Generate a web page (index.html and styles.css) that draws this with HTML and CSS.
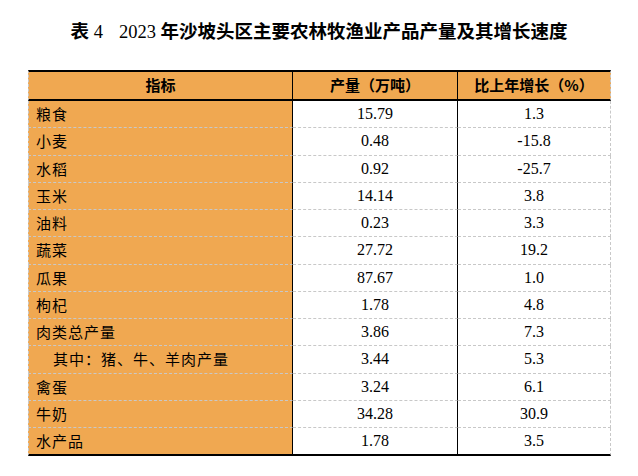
FILE: index.html
```html
<!DOCTYPE html>
<html lang="zh-CN">
<head>
<meta charset="utf-8">
<title>表4 2023年沙坡头区主要农林牧渔业产品产量及其增长速度</title>
<link rel="stylesheet" href="styles.css">
</head>
<body>
<h1 class="title">表 <span class="lat">4</span><span class="gap"></span><span class="lat">2023</span> 年沙坡头区主要农林牧渔业产品产量及其增长速度</h1>
<table class="stats">
  <colgroup>
    <col class="c1"><col class="c2"><col class="c3">
  </colgroup>
  <thead>
    <tr>
      <th>指标</th>
      <th>产量（万吨）</th>
      <th>比上年增长（%）</th>
    </tr>
  </thead>
  <tbody>
    <tr><td class="name">粮食</td><td>15.79</td><td>1.3</td></tr>
    <tr><td class="name">小麦</td><td>0.48</td><td>-15.8</td></tr>
    <tr><td class="name">水稻</td><td>0.92</td><td>-25.7</td></tr>
    <tr><td class="name">玉米</td><td>14.14</td><td>3.8</td></tr>
    <tr><td class="name">油料</td><td>0.23</td><td>3.3</td></tr>
    <tr><td class="name">蔬菜</td><td>27.72</td><td>19.2</td></tr>
    <tr><td class="name">瓜果</td><td>87.67</td><td>1.0</td></tr>
    <tr><td class="name">枸杞</td><td>1.78</td><td>4.8</td></tr>
    <tr><td class="name">肉类总产量</td><td>3.86</td><td>7.3</td></tr>
    <tr><td class="name sub">其中：猪、牛、羊肉产量</td><td>3.44</td><td>5.3</td></tr>
    <tr><td class="name">禽蛋</td><td>3.24</td><td>6.1</td></tr>
    <tr><td class="name">牛奶</td><td>34.28</td><td>30.9</td></tr>
    <tr><td class="name">水产品</td><td>1.78</td><td>3.5</td></tr>
  </tbody>
</table>
</body>
</html>
```
FILE: styles.css
```css
html, body {
  margin: 0;
  padding: 0;
  background: #ffffff;
  color: #000000;
}

body {
  width: 638px;
  height: 476px;
  overflow: hidden;
}

.title {
  margin: 0;
  padding-top: 23px;
  height: 19px;
  line-height: 19px;
  text-align: center;
  font-family: "Liberation Serif", "Noto Sans CJK SC", serif;
  font-size: 18.5px;
  font-weight: bold;
  white-space: nowrap;
}

.title .lat {
  font-family: "Liberation Serif", serif;
  font-weight: normal;
}

.title .gap {
  display: inline-block;
  width: 16px;
}

.stats {
  margin: 28px 0 0 28px;
  width: 583px;
  border-collapse: separate;
  border-spacing: 0;
  table-layout: fixed;
}

.stats .c1 { width: 265px; }
.stats .c2 { width: 165px; }
.stats .c3 { width: 153px; }

.stats th,
.stats td {
  padding: 0;
  text-align: center;
  vertical-align: middle;
  border-right: 1px solid #000000;
}

.stats th:first-child,
.stats td:first-child {
  border-left: 1px dashed #c8c8c8;
}

.stats th:last-child,
.stats td:last-child {
  border-right: 1px dashed #c8c8c8;
}

.stats th {
  height: 25px;
  background: #f0a851;
  border-top: 2px solid #000000;
  border-bottom: 2px solid #000000;
  font-family: "Noto Sans CJK SC", sans-serif;
  font-size: 15px;
  font-weight: bold;
  line-height: 20px;
  padding-bottom: 2px;
}

.stats td {
  height: 26.25px;
  border-bottom: 1px dashed #c8c8c8;
  font-family: "Liberation Serif", serif;
  font-size: 16px;
  line-height: 18px;
}

.stats tbody tr:last-child td {
  border-bottom: 2px solid #000000;
}

.stats td.name {
  background: #f0a851;
  text-align: left;
  padding-left: 7px;
  font-family: "Noto Sans CJK SC", sans-serif;
  font-size: 15px;
  letter-spacing: 1px;
}

.stats td.sub {
  padding-left: 24px;
}
```
